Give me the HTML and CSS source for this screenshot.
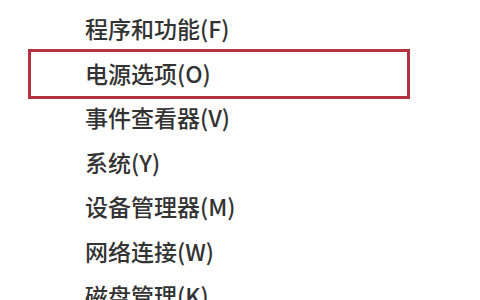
FILE: index.html
```html
<!DOCTYPE html>
<html lang="zh-CN">
<head>
    <meta charset="UTF-8">
    <title>快速链接菜单</title>
    <link rel="stylesheet" href="styles.css">
</head>
<body>
    <ul class="menu">
        <li class="item">程序和功能(F)</li>
        <li class="item marked">电源选项(O)</li>
        <li class="item">事件查看器(V)</li>
        <li class="item">系统(Y)</li>
        <li class="item">设备管理器(M)</li>
        <li class="item">网络连接(W)</li>
        <li class="item">磁盘管理(K)</li>
    </ul>
</body>
</html>
```

FILE: styles.css
```css
* {
    margin: 0;
    padding: 0;
    box-sizing: border-box;
}

body {
    background: #fff;
    width: 480px;
    height: 300px;
    overflow: hidden;
    font-family: "Noto Sans CJK SC", "Noto Sans", sans-serif;
}

.menu {
    list-style: none;
    position: relative;
    padding: 6px 0 0 85px;
}

.item {
    height: 44.5px;
    line-height: 44.5px;
    font-size: 23px;
    font-weight: 500;
    color: #333;
    white-space: nowrap;
}

/* red annotation frame over the second entry */
.marked {
    position: relative;
}

.marked::after {
    content: "";
    position: absolute;
    left: -57px;
    width: 376px;
    top: -2px;
    bottom: -4px;
    border: 3px solid #b3323f;
}
```
